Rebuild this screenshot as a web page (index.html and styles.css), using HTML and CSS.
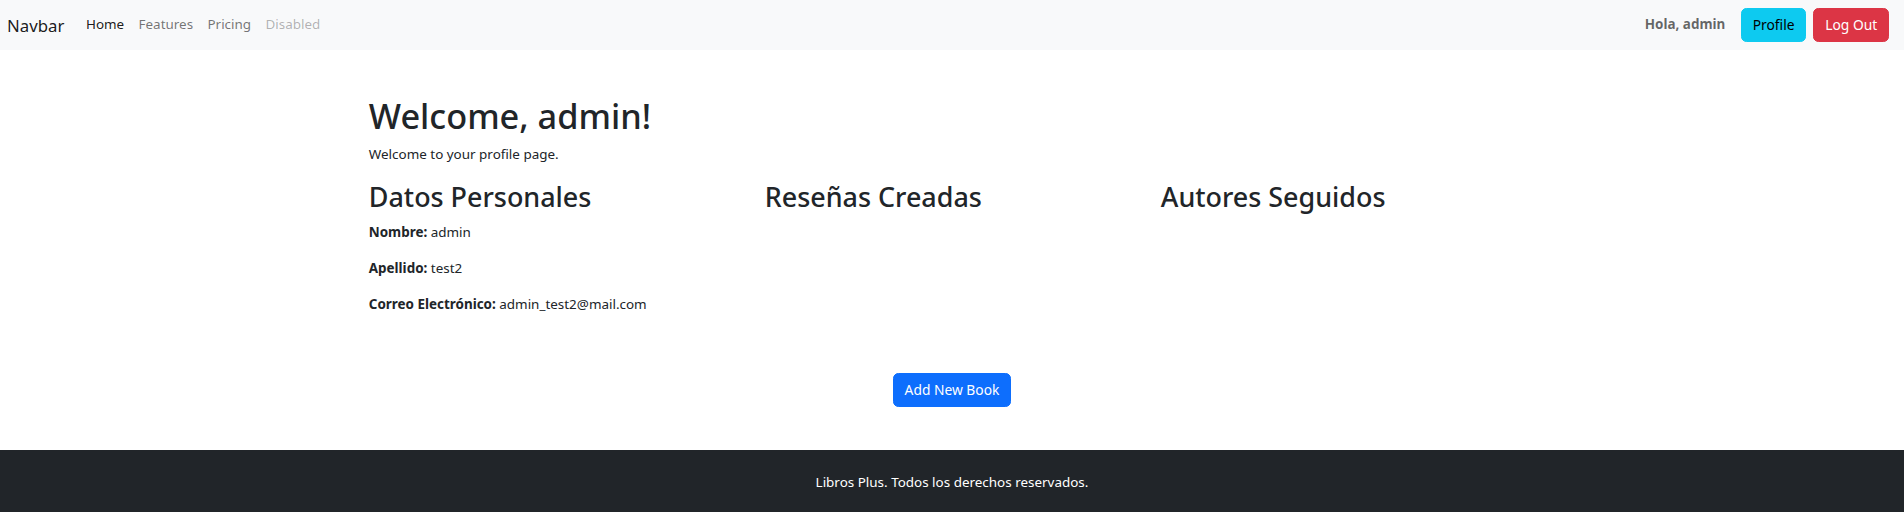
FILE: index.html
```html
<!DOCTYPE html>
<html lang="es">
<head>
<meta charset="utf-8">
<title>Profile</title>
<link rel="stylesheet" href="styles.css">
</head>
<body>
<nav class="navbar">
  <div class="navbar-inner">
    <div class="navbar-left">
      <a class="brand" href="#">Navbar</a>
      <ul class="nav">
        <li><a class="nav-link active" href="#">Home</a></li>
        <li><a class="nav-link" href="#">Features</a></li>
        <li><a class="nav-link" href="#">Pricing</a></li>
        <li><a class="nav-link disabled" href="#">Disabled</a></li>
      </ul>
    </div>
    <div class="navbar-right">
      <span class="navbar-text">Hola, admin</span>
      <a class="btn btn-info" href="#">Profile</a>
      <a class="btn btn-danger" href="#">Log Out</a>
    </div>
  </div>
</nav>

<main class="container">
  <h1 class="title">Welcome, admin!</h1>
  <p class="lead-text">Welcome to your profile page.</p>
  <div class="row">
    <div class="col">
      <h2 class="section-title">Datos Personales</h2>
      <p><strong>Nombre:</strong> admin</p>
      <p><strong>Apellido:</strong> test2</p>
      <p><strong>Correo Electrónico:</strong> admin_test2@mail.com</p>
    </div>
    <div class="col">
      <h2 class="section-title">Reseñas Creadas</h2>
    </div>
    <div class="col">
      <h2 class="section-title">Autores Seguidos</h2>
    </div>
  </div>
  <div class="actions">
    <a class="btn btn-primary" href="#">Add New Book</a>
  </div>
</main>

<footer class="footer">
  <p>Libros Plus. Todos los derechos reservados.</p>
</footer>
</body>
</html>
```

FILE: styles.css
```css
* {
  box-sizing: border-box;
}

html, body {
  margin: 0;
  padding: 0;
}

body {
  font-family: "Noto Sans", "Open Sans", sans-serif;
  font-size: 13.45px;
  line-height: 21.6px;
  color: #212529;
  background: #fff;
}

a {
  text-decoration: none;
}

/* Navbar */
.navbar {
  background: #f8f9fa;
  padding: 7.2px 0;
}

.navbar-inner {
  display: flex;
  align-items: center;
  justify-content: space-between;
  padding: 0 15px 0 7px;
}

.navbar-left {
  display: flex;
  align-items: center;
}

.brand {
  font-size: 16.8px;
  line-height: 27px;
  padding: 4.5px 0;
  margin-right: 14.4px;
  color: rgba(0, 0, 0, 0.9);
}

.nav {
  display: flex;
  list-style: none;
  margin: 0;
  padding: 0;
}

.nav-link {
  display: block;
  padding: 7.2px;
  color: rgba(0, 0, 0, 0.55);
}

.nav-link.active {
  color: rgba(0, 0, 0, 0.9);
}

.nav-link.disabled {
  color: rgba(0, 0, 0, 0.3);
}

.navbar-right {
  display: flex;
  align-items: center;
  gap: 7.2px;
}

.navbar-text {
  font-weight: 700;
  color: rgba(0, 0, 0, 0.6);
  margin-right: 8.5px;
}

/* Buttons */
.btn {
  display: inline-block;
  padding: 5.4px 10.8px;
  border: 1px solid transparent;
  border-radius: 5.4px;
  font-size: 13.8px;
  line-height: 21.6px;
  text-align: center;
}

.btn-info {
  background: #0dcaf0;
  border-color: #0dcaf0;
  color: #000;
}

.btn-danger {
  background: #dc3545;
  border-color: #dc3545;
  color: #fff;
}

.btn-primary {
  background: #0d6efd;
  border-color: #0d6efd;
  color: #fff;
}

/* Main */
.container {
  width: 1188px;
  margin: 43.2px auto 0;
  padding: 0 10.8px;
}

.title {
  font-size: 34.3px;
  font-weight: 500;
  line-height: 43.2px;
  margin: 0 0 7.2px;
}

.lead-text {
  margin: 0 0 14.4px;
}

.row {
  display: flex;
  margin: 0 -10.8px;
}

.col {
  flex: 0 0 33.3333%;
  padding: 0 10.8px;
}

.section-title {
  font-size: 26.9px;
  font-weight: 500;
  line-height: 34.56px;
  margin: 0 0 7.2px;
}

.col p {
  margin: 0 0 14.4px;
}

.actions {
  text-align: center;
  padding: 43.2px 0;
}

/* Footer */
.footer {
  background: #212529;
  color: #fff;
  text-align: center;
  padding: 21.6px 0;
}

.footer p {
  margin: 0;
}
```
